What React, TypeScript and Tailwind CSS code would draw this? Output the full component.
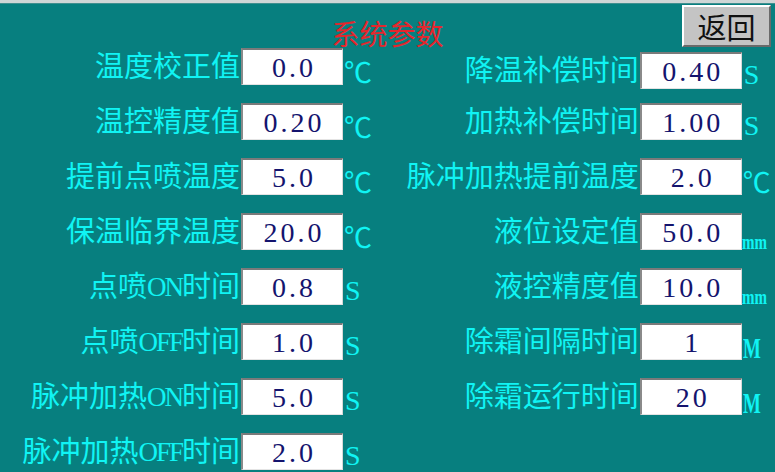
import React from "react";

type Row = { label: string; value: string; unit: "C" | "S" | "mm" | "M" };

const leftRows: Row[] = [
  { label: "温度校正值", value: "0.0", unit: "C" },
  { label: "温控精度值", value: "0.20", unit: "C" },
  { label: "提前点喷温度", value: "5.0", unit: "C" },
  { label: "保温临界温度", value: "20.0", unit: "C" },
  { label: "点喷ON时间", value: "0.8", unit: "S" },
  { label: "点喷OFF时间", value: "1.0", unit: "S" },
  { label: "脉冲加热ON时间", value: "5.0", unit: "S" },
  { label: "脉冲加热OFF时间", value: "2.0", unit: "S" },
];

const rightRows: Row[] = [
  { label: "降温补偿时间", value: "0.40", unit: "S" },
  { label: "加热补偿时间", value: "1.00", unit: "S" },
  { label: "脉冲加热提前温度", value: "2.0", unit: "C" },
  { label: "液位设定值", value: "50.0", unit: "mm" },
  { label: "液控精度值", value: "10.0", unit: "mm" },
  { label: "除霜间隔时间", value: "1", unit: "M" },
  { label: "除霜运行时间", value: "20", unit: "M" },
];

function Unit({ unit }: { unit: Row["unit"] }) {
  if (unit === "C")
    return (
      <span className="ml-[1px] text-[28px] leading-[28px] text-[#10f4f4] [font-family:'Noto_Sans_CJK_SC',sans-serif]">
        ℃
      </span>
    );
  if (unit === "S")
    return (
      <span className="mb-[3px] ml-[2px] text-[28px] leading-[22px] text-[#10f4f4] [font-family:'Liberation_Serif',serif]">
        S
      </span>
    );
  if (unit === "mm")
    return (
      <span className="mb-[1px] inline-block origin-left scale-x-[0.75] text-[20px] font-bold leading-[14px] text-[#10f4f4] [font-family:'Liberation_Serif',serif]">
        mm
      </span>
    );
  return (
    <span className="ml-[1px] inline-block origin-left scale-x-[0.65] text-[29px] font-bold leading-[24px] text-[#10f4f4] [font-family:'Liberation_Serif',serif]">
      M
    </span>
  );
}

function Label({ text }: { text: string }) {
  const parts = text.split(/([A-Z]+)/);
  return (
    <>
      {parts.map((p, i) =>
        /^[A-Z]+$/.test(p) ? (
          <span key={i} className="text-[27px] tracking-[-2px]">
            {p}
          </span>
        ) : (
          <span key={i}>{p}</span>
        )
      )}
    </>
  );
}

function Field({ row, labelWidth }: { row: Row; labelWidth: string }) {
  return (
    <div className="flex h-[37px] items-end">
      <div
        className={`${labelWidth} flex h-[37px] items-center justify-end whitespace-nowrap pt-[1px] pr-[1px] text-[29px] leading-none text-[#10f4f4] [font-family:'Liberation_Serif','Noto_Sans_CJK_SC',serif]`}
      >
        <Label text={row.label} />
      </div>
      <div className="flex h-[37px] w-[102px] items-center justify-center border-t-2 border-l-2 border-r border-b border-t-[#7a7a7a] border-l-[#8a8a8a] border-r-[#d8d8d8] border-b-[#e4e4e4] bg-white pl-[3px] pt-[2px] text-[28px] leading-none tracking-[3px] text-[#14146e] [font-family:'Liberation_Serif',serif]">
        {row.value}
      </div>
      <Unit unit={row.unit} />
    </div>
  );
}

export default function App() {
  return (
    <div className="h-[472px] w-[775px] overflow-hidden bg-[#077f7f]">
      <div className="h-[3px] bg-[#cfd6d6]" />
      <div className="h-[1px] bg-[#3f8f8f]" />
      <div className="grid h-[44px] grid-cols-[1fr_auto_1fr]">
        <div />
        <div className="pt-[14px] text-[28px] leading-[30px] text-[#e5262c] [font-family:'Noto_Sans_CJK_SC',sans-serif]">
          系统参数
        </div>
        <div className="flex justify-end pr-[4px] pt-[1px]">
          <button className="flex h-[42px] w-[89px] items-center justify-center border-2 border-t-white border-l-white border-r-[#6a6a6a] border-b-[#6a6a6a] bg-[#c4c4c4] text-[29px] leading-none text-[#111] [font-family:'Noto_Sans_CJK_SC',sans-serif]">
            返回
          </button>
        </div>
      </div>
      <div className="flex">
        <div className="flex w-[385px] flex-col gap-[18px]">
          {leftRows.map((r) => (
            <Field key={r.label} row={r} labelWidth="w-[241px]" />
          ))}
        </div>
        <div className="flex flex-col gap-[18px]">
          {rightRows.map((r, i) => (
            <div key={r.label} className={i === 0 ? "mt-[4px] -mb-[4px]" : ""}>
              <Field row={r} labelWidth="w-[255px]" />
            </div>
          ))}
        </div>
      </div>
    </div>
  );
}
